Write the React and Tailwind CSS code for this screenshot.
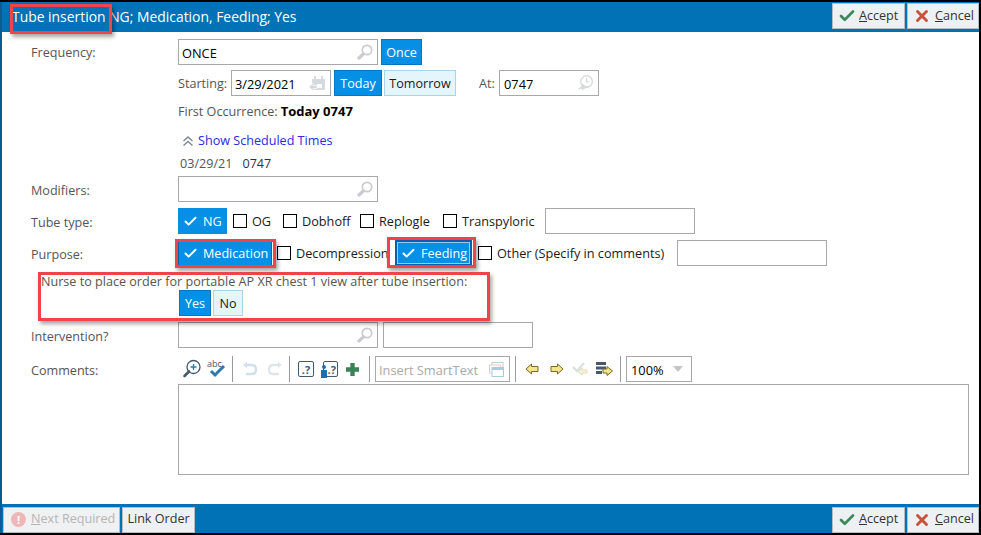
import { Check, X } from 'lucide-react';

const field = "border border-[#a8a8a8] bg-white h-[26px] flex items-center text-[12.8px]";

function Search() {
  return (
    <svg width="16" height="16" viewBox="0 0 16 16" className="shrink-0">
      <circle cx="10" cy="6" r="4.7" fill="none" stroke="#c8ccd0" strokeWidth="1.7" />
      <path d="M6.4 9.8 L2 14" stroke="#c8ccd0" strokeWidth="3.2" strokeLinecap="round" />
    </svg>
  );
}

function SearchField({ value }) {
  return (
    <div className={`${field} w-[200px] justify-between pl-[3px] pr-[4px] text-black`}>
      <span className="mt-[4px]">{value}</span>
      <Search />
    </div>
  );
}

function Toggle({ children, on, className = "" }) {
  return (
    <div className={`h-[26px] flex items-center justify-center border pt-[2px] text-[12.6px] ${on ? "bg-[#0590e6] border-[#0577c0] text-white" : "bg-[#e4f5fc] border-[#a9d5e8] text-[#1a1a1a]"} ${className}`}>
      {children}
    </div>
  );
}

function Picked({ children, className = "" }) {
  return (
    <div className={`h-[26px] flex items-center gap-[5px] bg-[#0590e6] text-white text-[12.6px] ${className}`}>
      <Check size={15} strokeWidth={3} />
      <span className="pt-[2px]">{children}</span>
    </div>
  );
}

function Box({ label, w }) {
  return (
    <div className={`flex items-center overflow-hidden text-[12.7px] text-[#1a1a1a] ${w}`}>
      <span className="w-[14px] h-[14px] border border-black bg-white shrink-0 mr-[5px]" />
      <span className="whitespace-nowrap pt-[2px]">{label}</span>
    </div>
  );
}

function Row({ label, children, className = "", labelPad = "pt-[4px]" }) {
  return (
    <div className={`flex items-center ${className}`}>
      <div className={`w-[147px] text-[12.6px] text-[#555] shrink-0 ${labelPad}`}>{label}</div>
      {children}
    </div>
  );
}

function Sep({ className = "" }) {
  return <span className={`w-[1px] h-[26px] bg-[#9a9a9a] shrink-0 ${className}`} />;
}

function FooterBtn({ children, className = "" }) {
  return (
    <div className={`h-[26px] flex items-center border border-[#b4bcc4] text-[12.6px] ${className}`}>
      {children}
    </div>
  );
}

function AcceptCancel() {
  return (
    <div className="flex gap-[2px]">
      <FooterBtn className="w-[73px] pl-[5px] gap-[3px] bg-[#eef1f4] text-[#333]">
        <Check size={18} strokeWidth={3.6} className="text-[#3c8a5c]" />
        <span><u>A</u>ccept</span>
      </FooterBtn>
      <FooterBtn className="w-[72px] pl-[5px] gap-[4px] bg-[#eef1f4] text-[#333]">
        <X size={18} strokeWidth={3.8} className="text-[#c8523a]" />
        <span><u>C</u>ancel</span>
      </FooterBtn>
    </div>
  );
}

function Toolbar() {
  return (
    <div className="flex items-center h-[26px]">
      <svg width="20" height="20" viewBox="0 0 20 20" className="ml-[4px]">
        <circle cx="11.5" cy="8" r="6.5" fill="none" stroke="#46596b" strokeWidth="1.3" />
        <path d="M8.5 8h6M11.5 5v6" stroke="#2c7bb0" strokeWidth="1.3" />
        <path d="M7 12.5 L2.5 17" stroke="#46596b" strokeWidth="2.6" strokeLinecap="round" />
      </svg>
      <svg width="20" height="20" viewBox="0 0 20 20" className="ml-[4px] overflow-visible">
        <text x="1" y="8" fontSize="9" fill="#46596b" fontFamily="Open Sans">abc</text>
        <path d="M5 12 L9 16 L18 7" fill="none" stroke="#2c7bb0" strokeWidth="3" />
      </svg>
      <Sep className="ml-[6px]" />
      <svg width="18" height="14" viewBox="0 0 18 14" className="ml-[9px]">
        <path d="M1 3 L5 0 V6 Z" fill="#cfe0ea" />
        <path d="M4 3 H10 Q14 3 14 7.5 Q14 12 10 12 H4" fill="none" stroke="#cfe0ea" strokeWidth="2.4" />
      </svg>
      <svg width="18" height="14" viewBox="0 0 18 14" className="ml-[5px]">
        <path d="M17 3 L13 0 V6 Z" fill="#dfe6ea" />
        <path d="M14 3 H8 Q4 3 4 7.5 Q4 12 8 12 H14" fill="none" stroke="#dfe6ea" strokeWidth="2.4" />
      </svg>
      <Sep className="ml-[6px]" />
      <div className="w-[16px] h-[16px] ml-[8px] border border-[#46596b] rounded-[2px] flex items-center justify-center text-[11px] font-bold leading-none text-[#46596b]">.?</div>
      <div className="relative w-[15px] h-[16px] ml-[9px] border border-[#46596b] rounded-[2px] flex items-center justify-end pr-[1px] text-[11px] font-bold leading-none text-[#46596b]">
        .?
        <span className="absolute left-[-2px] top-[3px] w-[4px] h-[4px] rounded-full bg-[#1f6fa8]" />
        <span className="absolute left-[-3px] top-[8px] w-[6px] h-[8px] bg-[#1f6fa8]" />
      </div>
      <svg width="13" height="13" viewBox="0 0 12 12" className="ml-[8px]">
        <path d="M4 0h4v4h4v4H8v4H4V8H0V4h4z" fill="#3a8258" />
      </svg>
      <Sep className="ml-[10px]" />
      <div className={`${field} w-[135px] justify-between ml-[5px] pl-[3px] pr-[5px] text-[#a8a8a8]`}>
        <span className="mt-[3px]">Insert SmartText</span>
        <svg width="15" height="15" viewBox="0 0 15 15">
          <rect x="3" y="0.5" width="11" height="8" fill="#fff" stroke="#bcd5c8" />
          <rect x="0.5" y="3" width="11" height="8" fill="#fff" stroke="#ecc9c2" />
          <rect x="3" y="5.5" width="11.5" height="9" fill="#fff" stroke="#a9cbe0" />
          <rect x="3" y="5.5" width="11.5" height="2.5" fill="#a9cbe0" />
        </svg>
      </div>
      <Sep className="ml-[5px]" />
      <svg width="14" height="12" viewBox="0 0 14 12" className="ml-[9px]">
        <path d="M6.5 1 L1 6 L6.5 11 V8.5 H13 V3.5 H6.5 Z" fill="#f2e58c" stroke="#7b6a1e" />
      </svg>
      <svg width="14" height="12" viewBox="0 0 14 12" className="ml-[11px]">
        <path d="M7.5 1 L13 6 L7.5 11 V8.5 H1 V3.5 H7.5 Z" fill="#f2e58c" stroke="#7b6a1e" />
      </svg>
      <svg width="16" height="14" viewBox="0 0 16 14" className="ml-[8px]">
        <path d="M1 5 L5 9 L12 1" fill="none" stroke="#d6e4dc" strokeWidth="2.4" />
        <path d="M10 6 L6 9.5 L10 13 V11 H15 V8 H10 Z" fill="#f7f3dd" stroke="#e3dcb8" />
      </svg>
      <svg width="17" height="16" viewBox="0 0 17 16" className="ml-[8px]">
        <path d="M0 1h10v3H0zM0 5.5h10v3H0zM0 10h6v3H0z" fill="#46596b" />
        <path d="M11 5.5 L16.5 10 L11 14.5 V12 H7 V8 H11 Z" fill="#f2e58c" stroke="#7b6a1e" />
      </svg>
      <Sep className="ml-[7px]" />
      <div className={`${field} w-[66px] justify-between ml-[5px] pl-[4px] pr-[8px] text-black`}>
        <span className="mt-[3px]">100%</span>
        <span className="w-0 h-0 border-x-[5px] border-x-transparent border-t-[6px] border-t-[#c0c6cc]" />
      </div>
    </div>
  );
}

export default function App() {
  return (
    <div className="relative w-[981px] h-[535px] flex flex-col bg-black pt-[2px] pb-[2px] pr-[2px] font-['Open_Sans',sans-serif] overflow-hidden">
      <div className="flex-1 flex flex-col min-h-0 border-l-2 border-l-[#0a5d94] bg-white">
        <div className="h-[30px] bg-[#0072b5] flex items-start justify-between shrink-0">
          <div className="text-white text-[13.9px] leading-[30px] pl-[10px]">Tube insertion  NG; Medication, Feeding; Yes</div>
          <div className="pt-[1px]"><AcceptCancel /></div>
        </div>

        <div className="flex-1 flex flex-col pl-[29px] pt-[7px]">
          <Row label="Frequency:" labelPad="pt-[2px]">
            <SearchField value="ONCE" />
            <Toggle on className="w-[41px] ml-[3px]">Once</Toggle>
          </Row>

          <div className="flex items-center mt-[5px] ml-[147px]">
            <span className="w-[53px] pt-[2px] text-[12.6px] text-[#555]">Starting:</span>
            <div className={`${field} w-[100px] justify-between pl-[3px] pr-[5px] text-black`}>
              <span className="mt-[4px]">3/29/2021</span>
              <svg width="16" height="15" viewBox="0 0 16 15">
                <path d="M3 3h13v11H3z" fill="#d5dade" />
                <path d="M6 0v4M13 0v4" stroke="#d5dade" strokeWidth="2" />
                <path d="M8 8h5v4H8z" fill="#fff" />
                <path d="M0 11 L4 7 V9.5 H8 V12.5 H4 V15 Z" fill="#d5dade" stroke="#fff" strokeWidth="0.6" />
              </svg>
            </div>
            <Toggle on className="w-[48px] ml-[3px]">Today</Toggle>
            <Toggle className="w-[72px] ml-[2px]">Tomorrow</Toggle>
            <span className="ml-[23px] w-[20px] pt-[2px] text-[12.6px] text-[#555]">At:</span>
            <div className={`${field} w-[100px] justify-between pl-[4px] pr-[5px] text-black`}>
              <span className="mt-[4px]">0747</span>
              <svg width="16" height="16" viewBox="0 0 16 16">
                <circle cx="9.5" cy="6.5" r="5.8" fill="none" stroke="#d5dade" strokeWidth="1.4" />
                <path d="M9.5 3v4h3" fill="none" stroke="#d5dade" strokeWidth="1.2" />
                <path d="M0.5 15 L5 10.5 V8.5 L10.5 12 L5 15.5 V13.5 Z" fill="#d5dade" />
              </svg>
            </div>
          </div>

          <div className="ml-[147px] mt-[7px] h-[18px] flex items-center text-[12.6px] text-[#555]">
            <span>First Occurrence:</span>
            <span className="ml-[3px] font-bold text-[13px] text-black">Today 0747</span>
          </div>

          <div className="ml-[147px] mt-[11px] h-[18px] flex items-center text-[12.6px] text-[#2a2ae0]">
            <svg width="12" height="12" viewBox="0 0 12 12" className="ml-[4px] mr-[4px]">
              <path d="M1.5 6 L6 2 L10.5 6 M1.5 10.5 L6 6.5 L10.5 10.5" fill="none" stroke="#7d8a96" strokeWidth="1.5" />
            </svg>
            Show Scheduled Times
          </div>

          <div className="ml-[149px] mt-[5px] h-[18px] flex items-center text-[12.6px]">
            <span className="text-[#555]">03/29/21</span>
            <span className="ml-[10px] text-[#333]">0747</span>
          </div>

          <Row label="Modifiers:" className="mt-[3px]">
            <SearchField value="" />
          </Row>

          <Row label="Tube type:" className="mt-[6px]">
            <Picked className="w-[49px] pl-[5px]">NG</Picked>
            <Box label="OG" w="w-[50px] ml-[6px]" />
            <Box label="Dobhoff" w="w-[77px]" />
            <Box label="Replogle" w="w-[83px]" />
            <Box label="Transpyloric" w="w-[102px]" />
            <div className={`${field} w-[150px]`} />
          </Row>

          <Row label="Purpose:" className="mt-[6px]">
            <Picked className="w-[94px] border border-[#0a66a8] pl-[4px]">Medication</Picked>
            <Box label="Decompression" w="w-[118px] ml-[5px]" />
            <Picked className="w-[77px] border-2 border-[#0a5fae] outline outline-1 -outline-offset-3 outline-[#9cc9e8] pl-[4px]">Feeding</Picked>
            <Box label="Other (Specify in comments)" w="w-[199px] ml-[6px]" />
            <div className={`${field} w-[150px]`} />
          </Row>

          <div className="text-[12.6px] text-[#555] ml-[10px] mt-[7px] h-[17px] leading-[18px] whitespace-nowrap">Nurse to place order for portable AP XR chest 1 view after tube insertion:</div>
          <div className="flex ml-[148px] gap-[2px]">
            <Toggle on className="w-[32px]">Yes</Toggle>
            <Toggle className="w-[30px]">No</Toggle>
          </div>

          <Row label="Intervention?" className="mt-[6px]">
            <SearchField value="" />
            <div className={`${field} w-[150px] ml-[5px]`} />
          </Row>

          <Row label="Comments:" className="mt-[8px]">
            <Toolbar />
          </Row>

          <div className="ml-[147px] mt-[2px] w-[791px] h-[91px] border border-[#a8a8a8] bg-white" />
        </div>

        <div className="h-[29px] pt-[2px] bg-[#0072b5] flex items-center justify-between shrink-0">
          <div className="flex gap-[2px] pl-[1px]">
            <FooterBtn className="w-[117px] pl-[7px] gap-[5px] bg-[#f0f1f2] text-[#b5b5b5]">
              <span className="w-[15px] h-[15px] rounded-full bg-[#efb8b8] text-white text-[11px] font-bold flex items-center justify-center leading-none">!</span>
              <span><u>N</u>ext Required</span>
            </FooterBtn>
            <FooterBtn className="w-[73px] justify-center bg-[#eef1f4] text-[#333]">Link Order</FooterBtn>
          </div>
          <AcceptCancel />
        </div>
      </div>

      {/* red review marks drawn on top of the form */}
      <div className="absolute left-[10px] top-[4px] w-[102px] h-[30px] border-[3px] border-[#f0434a] shadow-[2px_3px_4px_rgba(0,0,0,0.35)]" />
      <div className="absolute left-[175px] top-[239px] w-[101px] h-[29px] border-[3px] border-[#f0434a] shadow-[2px_3px_4px_rgba(0,0,0,0.35)]" />
      <div className="absolute left-[387px] top-[237px] w-[89px] h-[31px] border-[3px] border-[#f0434a] shadow-[2px_3px_4px_rgba(0,0,0,0.35)]" />
      <div className="absolute left-[38px] top-[272px] w-[452px] h-[49px] border-[3px] border-[#f0434a] shadow-[2px_3px_4px_rgba(0,0,0,0.35)]" />
    </div>
  );
}
